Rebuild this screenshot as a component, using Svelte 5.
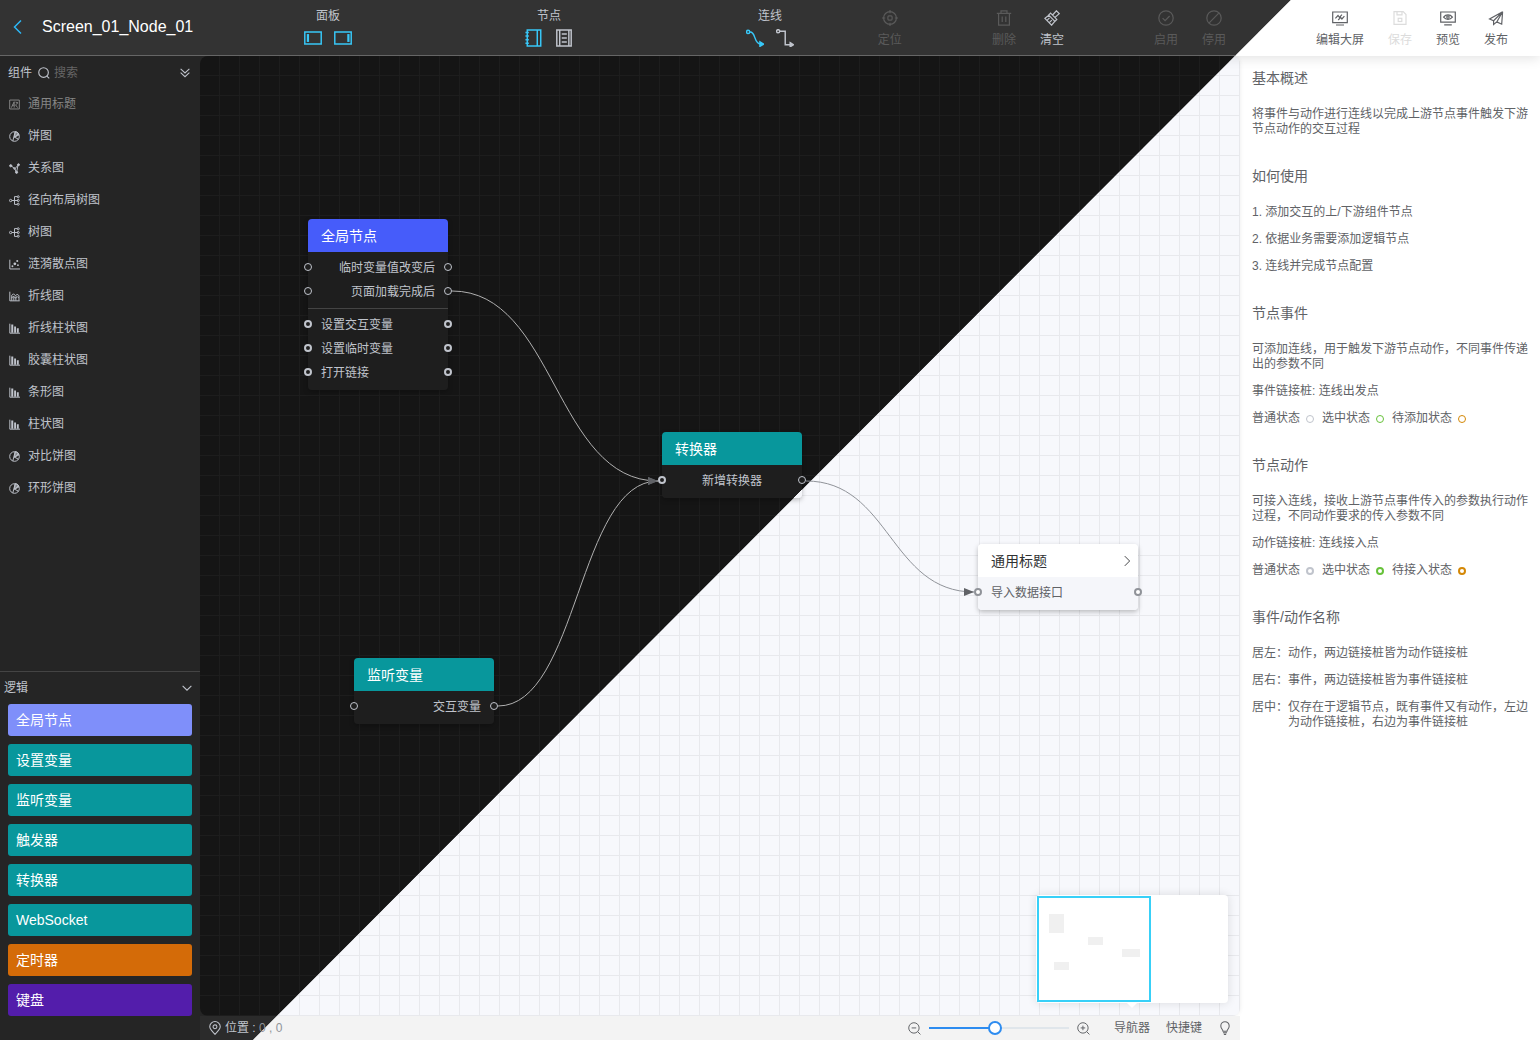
<script>
  let keyword = $state('');
  let zoom = $state(47);

  const icons = {
    back: '<path d="M11 1.5 4.5 8l6.5 6.5"/>',
    panelLeft: '<path d="M.7 2.7h14.6v10.6H.7z"/><path d="M3.5 4.5v7" stroke-width="2"/>',
    panelRight: '<path d="M.7 2.7h14.6v10.6H.7z"/><path d="M12.8 4.5v7" stroke-width="2"/>',
    notebook: '<path d="M2 .9h12v14.2H2zM10.900 .9v14.200"/><path d="M.4 3.2h3M.4 6.3h3M.4 9.500h3M.4 12.700h3"/>',
    list: '<path d="M1.600.9h12.800v14.200H1.600zM4.200.9v14.200M12.300.9v14.200"/><path d="M6 4.500h4.500M6 8h4.500M6 11.500h4.500"/>',
    smooth: '<circle cx="1.9" cy="2.6" r="1.4"/><path d="M3.5 2.6C9 2.2 6.5 13 13 13.4"/><path d="m12.4 11.4 3.2 2-3.2 2z" fill="currentColor"/>',
    elbow: '<circle cx="1.9" cy="2" r="1.4"/><path d="M3.5 2h4.7v12H13"/><path d="m12.6 12.2 2.8 1.8-2.8 1.8z" fill="currentColor"/>',
    locate: '<circle cx="8" cy="8" r="6.4"/><rect x="5.9" y="5.9" width="4.2" height="4.2" rx="1"/><path d="M8 0v3.2M8 12.8V16M0 8h3.2M12.8 8H16"/>',
    trash: '<path d="M.8 3.4h14.4M5 3.2V.8h6v2.4M2.6 3.6v11.6h10.8V3.6M6.2 6.5v5.6M9.8 6.5v5.6"/>',
    brush: '<path d="m6.600 3.200 6.200 6.200-1.900 1.900-6.200-6.200zM8.600 5l3.800-4.200 2.800 2.800-4.200 3.800M4.900 5.300.9 8.400l6.700 6.800 3.400-4.100M3 10.400l2.500-2.500M5.300 12.700l2.500-2.500"/>',
    check: '<circle cx="8" cy="8" r="7.2"/><path d="m4.6 8.1 2.5 2.5 4.5-4.6"/>',
    ban: '<circle cx="8" cy="8" r="7.2"/><path d="M3.2 12.8 12.8 3.2"/>',
    screen: '<path d="M.7 2h14.6v10.6H.7zM4 15h8"/><path d="m3.4 8.3 2.6-2.8 1.4 1.8L10 4.6M6.2 10l2.5-2.6 1.2 1.6 2.5-2.8"/>',
    save: '<path d="M2 1.7h9.2L14 4.5v9.8H2zM5 1.9v3h5v-3"/><rect x="6.2" y="8.3" width="3.6" height="3.2"/>',
    preview: '<path d="M.7 2h14.6v10.2H.7zM4.2 14.8h7.6"/><path d="M3.6 7.1c2.3-3 6.5-3 8.8 0-2.3 3-6.5 3-8.800 0z"/><circle cx="8" cy="7.1" r="1.2"/>',
    publish: '<path d="M14.600 1.800 1.600 9l4 1.700zM14.600 1.800l-.9 12.400-4.900-2.300zM5.600 10.700v3.800l3.200-2.600"/>',
    search: '<circle cx="7.4" cy="7.4" r="6.4"/><path d="m11.8 12.2 3.2 3"/>',
    doubleDown: '<path d="m1 1.500 7 6.500 7-6.500M1 7.500l7 6.500 7-6.500"/>',
    down: '<path d="m1 4.500 7 7 7-7"/>',
    right: '<path d="m5 1.5 6.5 6.5L5 14.5"/>',
    title: '<path d="M1 1.5h14v13H1zM3.5 12.5l4-8.5v8.5M4.5 9h3M9.5 4.5l3.5 1-3.5 3 3 4"/>',
    pie: '<circle cx="8" cy="8" r="7"/><path d="M5.500 14.500 9 1M8 9l5.500-5M8 9l6 3"/><path d="M9 1c3.500 0 5.500 2.500 5 5L8 9z" fill="currentColor" fill-opacity=".6"/>',
    relation: '<path d="m3 4 5.5 4.3L13.5 3M8.5 8.3l2.2 5.2M13 3.5l-1.5 8"/><circle cx="2.5" cy="4" r="1.6" fill="currentColor"/><circle cx="13.8" cy="2.5" r="1.4" fill="currentColor"/><circle cx="11" cy="13.5" r="1.6" fill="currentColor"/><circle cx="8" cy="8" r="1.2"/>',
    tree: '<circle cx="2.4" cy="8" r="1.7"/><path d="M4.2 8H13M12 2.3H8v11.4h4"/><circle cx="13.4" cy="2.6" r="1.5"/><circle cx="13.4" cy="8" r="1.5"/><circle cx="13.4" cy="13.4" r="1.5"/>',
    scatter: '<path d="M1.2 1v13.5H16"/><g fill="currentColor" stroke="none"><circle cx="5" cy="10.5" r="1.4"/><circle cx="8.5" cy="7" r="2"/><circle cx="13" cy="9" r="1.3"/><circle cx="12" cy="2.8" r="1.5"/></g>',
    line: '<path d="M1.2 1v13.3H15.5M3.5 7l3-3 3 3 2.5-2.5L14.5 7v7M3.5 10l3-2 3 2 2.5-2 2 2M4 7v7M7 8v6M10 8v6"/>',
    bar: '<path d="M1.2 1v13.8H16"/><g fill="currentColor" stroke="none"><path d="M3.3 2h2.9v12H3.3zM7.5 5h2.7v9H7.5zM11.4 7.5h2.8V14h-2.8z"/></g>',
    pin: '<path d="M8 15.2C4.6 11.8 2 9.2 2 6.6a6 6 0 0 1 12 0c0 2.6-2.6 5.2-6 8.6z"/><circle cx="8" cy="6.6" r="2.2"/>',
    zoomOut: '<circle cx="7.3" cy="7.3" r="6.4"/><path d="m12 12 3.3 3.3M4.5 7.3h5.6"/>',
    zoomIn: '<circle cx="7.3" cy="7.3" r="6.4"/><path d="m12 12 3.3 3.3M4.5 7.3h5.6M7.3 4.5v5.6"/>',
    bulb: '<path d="M5.7 11.8c0-2-2.5-3-2.5-6.2a4.8 4.8 0 0 1 9.6 0c0 3.2-2.5 4.2-2.5 6.2zM5.7 13.5h4.6M6.7 15.3h2.6"/>'
  };

  const switches = [
    { label: '面板', items: [['panelLeft', '左侧面板', true], ['panelRight', '右侧面板', true]] },
    { label: '节点', items: [['notebook', '节点展开', true], ['list', '节点收起', false]] },
    { label: '连线', items: [['smooth', '曲线', true], ['elbow', '折线', false]] }
  ];

  const actions = [
    [{ icon: 'locate', label: '定位', disabled: true }],
    [{ icon: 'trash', label: '删除', disabled: true }, { icon: 'brush', label: '清空' }],
    [{ icon: 'check', label: '启用', disabled: true }, { icon: 'ban', label: '停用', disabled: true }]
  ];

  const pageActions = [
    { icon: 'screen', label: '编辑大屏' },
    { icon: 'save', label: '保存', disabled: true },
    { icon: 'preview', label: '预览' },
    { icon: 'publish', label: '发布' }
  ];

  const components = [
    { icon: 'title', name: '通用标题', used: true },
    { icon: 'pie', name: '饼图' },
    { icon: 'relation', name: '关系图' },
    { icon: 'tree', name: '径向布局树图' },
    { icon: 'tree', name: '树图' },
    { icon: 'scatter', name: '涟漪散点图' },
    { icon: 'line', name: '折线图' },
    { icon: 'bar', name: '折线柱状图' },
    { icon: 'bar', name: '胶囊柱状图' },
    { icon: 'bar', name: '条形图' },
    { icon: 'bar', name: '柱状图' },
    { icon: 'pie', name: '对比饼图' },
    { icon: 'pie', name: '环形饼图' }
  ];

  const logics = [
    { name: '全局节点', type: 'global' },
    { name: '设置变量', type: 'normal' },
    { name: '监听变量', type: 'normal' },
    { name: '触发器', type: 'normal' },
    { name: '转换器', type: 'normal' },
    { name: 'WebSocket', type: 'normal' },
    { name: '定时器', type: 'timer' },
    { name: '键盘', type: 'keyboard' }
  ];

  // ports: thin 事件链接桩, thick 动作链接桩
  const nodes = [
    {
      name: '全局节点', type: 'blue', x: 108, y: 163, width: 140,
      groups: [
        [
          { text: '临时变量值改变后', align: 'right', ports: ['thin', 'thin'] },
          { text: '页面加载完成后', align: 'right', ports: ['thin', 'thin'] }
        ],
        [
          { text: '设置交互变量', align: 'left', ports: ['thick', 'thick'] },
          { text: '设置临时变量', align: 'left', ports: ['thick', 'thick'] },
          { text: '打开链接', align: 'left', ports: ['thick', 'thick'] }
        ]
      ]
    },
    {
      name: '转换器', type: 'teal split', x: 462, y: 376, width: 140,
      groups: [[{ text: '新增转换器', align: 'center', ports: ['thick', 'thin'] }]]
    },
    {
      name: '监听变量', type: 'teal', x: 154, y: 602, width: 140,
      groups: [[{ text: '交互变量', align: 'right', ports: ['thin', 'thin'] }]]
    },
    {
      name: '通用标题', type: 'light', x: 778, y: 488, width: 160, arrow: true,
      groups: [[{ text: '导入数据接口', align: 'left', ports: ['thick', 'thick'] }]]
    }
  ];

  const edges = [
    { d: 'M252 235C355 235 355 425 458 425', dark: true },
    { d: 'M298 650C378 650 378 425 458 425', dark: true },
    { d: 'M606 425C690 425 690 536 774 536' }
  ];

  const docs = [
    { title: '基本概述', lines: [{ text: '将事件与动作进行连线以完成上游节点事件触发下游节点动作的交互过程' }] },
    {
      title: '如何使用',
      lines: [
        { text: '1. 添加交互的上/下游组件节点' },
        { text: '2. 依据业务需要添加逻辑节点' },
        { text: '3. 连线并完成节点配置' }
      ]
    },
    {
      title: '节点事件',
      lines: [
        { text: '可添加连线，用于触发下游节点动作，不同事件传递出的参数不同' },
        { text: '事件链接桩: 连线出发点' },
        { port: 'thin', states: ['普通状态', '选中状态', '待添加状态'] }
      ]
    },
    {
      title: '节点动作',
      lines: [
        { text: '可接入连线，接收上游节点事件传入的参数执行动作过程，不同动作要求的传入参数不同' },
        { text: '动作链接桩: 连线接入点' },
        { port: 'thick', states: ['普通状态', '选中状态', '待接入状态'] }
      ]
    },
    {
      title: '事件/动作名称',
      lines: [
        { hanging: true, text: '居左：动作，两边链接桩皆为动作链接桩' },
        { hanging: true, text: '居右：事件，两边链接桩皆为事件链接桩' },
        { hanging: true, text: '居中：仅存在于逻辑节点，既有事件又有动作，左边为动作链接桩，右边为事件链接桩' }
      ]
    }
  ];
  const stateColors = ['#c0c4cc', '#67c23a', '#d48806'];

  const visible = $derived(components.filter((c) => c.name.includes(keyword)));
</script>

{#snippet icon(name, size = 16, stroke = 1.2)}
  <svg
    width={size}
    height={size}
    viewBox="0 0 16 16"
    fill="none"
    stroke="currentColor"
    stroke-width={stroke}
    aria-hidden="true">{@html icons[name]}</svg>
{/snippet}

{#snippet tool(item)}
  <button class="tool" disabled={item.disabled}>
    {@render icon(item.icon)}
    <span>{item.label}</span>
  </button>
{/snippet}

<div class="editor">
  {#each ['theme-light', 'theme-dark'] as theme}
    <div class="theme {theme}" aria-hidden="true">
      <div class="theme-bar"></div>
      <div class="theme-canvas"></div>
      <div class="theme-foot"></div>
    </div>
  {/each}

  <header>
    <div class="name">
      <button class="back" aria-label="返回">{@render icon('back', 16, 1.5)}</button>
      <h1>Screen_01_Node_01</h1>
    </div>
    <div class="toolbar">
      <div class="switches">
        {#each switches as group}
          <div class="switch">
            <span>{group.label}</span>
            <div class="switch-items">
              {#each group.items as [name, label, active]}
                <button class:active aria-label={label}>{@render icon(name, 18, 1.3)}</button>
              {/each}
            </div>
          </div>
        {/each}
      </div>
      <div class="actions">
        {#each actions as group}
          <div class="group">
            {#each group as item}{@render tool(item)}{/each}
          </div>
        {/each}
      </div>
    </div>
    <div class="group page-actions">
      {#each pageActions as item}{@render tool(item)}{/each}
    </div>
  </header>

  <div class="body">
    <aside class="sidebar">
      <div class="search">
        <label for="keyword">组件</label>
        {@render icon('search', 12, 1.5)}
        <input id="keyword" type="text" placeholder="搜索" bind:value={keyword} />
        <button aria-label="全部收起">{@render icon('doubleDown', 10, 1.7)}</button>
      </div>
      <ul class="components">
        {#each visible as item}
          <li>
            <button class:used={item.used}>
              {@render icon(item.icon, 11, 1.4)}
              <span>{item.name}</span>
            </button>
          </li>
        {/each}
      </ul>
      <div class="logic">
        <div class="logic-head">
          <span>逻辑</span>
          <button aria-label="收起">{@render icon('down', 10, 1.7)}</button>
        </div>
        {#each logics as item}
          <button class="logic-item {item.type}">{item.name}</button>
        {/each}
      </div>
    </aside>

    <main>
      <div class="canvas">
        <svg class="edges" aria-hidden="true">
          <defs>
            <marker id="arrow" viewBox="0 0 10 8" refX="10" refY="4" markerWidth="10" markerHeight="8" orient="0" markerUnits="userSpaceOnUse">
              <path d="M0 0 10 4 0 8z" fill="#606266" />
            </marker>
          </defs>
          {#each edges as edge}
            <path class:dark={edge.dark} d={edge.d} marker-end="url(#arrow)" />
          {/each}
        </svg>

        {#each nodes as node}
          <div class="node {node.type}" style="left: {node.x}px; top: {node.y}px; width: {node.width}px">
            <div class="node-head">
              <span>{node.name}</span>
              {#if node.arrow}{@render icon('right', 12)}{/if}
            </div>
            <div class="node-body">
              {#each node.groups as rows}
                <div class="node-group">
                  {#each rows as row}
                    <div class="row" style="text-align: {row.align}">
                      <i class="port start {row.ports[0]}"></i>
                      {row.text}
                      <i class="port end {row.ports[1]}"></i>
                    </div>
                  {/each}
                </div>
              {/each}
            </div>
          </div>
        {/each}

        <div class="minimap">
          <svg width="192" height="108" aria-hidden="true">
            <g fill="#f0f0f0">
              <rect x="13" y="19" width="15" height="19" />
              <rect x="52" y="42" width="15" height="8" />
              <rect x="86" y="54" width="18" height="8" />
              <rect x="18" y="67" width="15" height="8" />
            </g>
            <rect x="2" y="2" width="112" height="104" fill="none" stroke="#38d0f8" stroke-width="2" />
          </svg>
        </div>
      </div>

      <footer>
        <div class="position">
          {@render icon('pin', 14)}
          <span>位置 : <em>0 , 0</em></span>
        </div>
        <div class="zoom">
          <button aria-label="缩小">{@render icon('zoomOut', 13)}</button>
          <input
            type="range"
            min="0"
            max="100"
            aria-label="缩放"
            bind:value={zoom}
            style="--percent: {zoom}%"
          />
          <button aria-label="放大">{@render icon('zoomIn', 13)}</button>
        </div>
        <button>导航器</button>
        <button>快捷键</button>
        <button aria-label="帮助">{@render icon('bulb', 14)}</button>
      </footer>
    </main>

    <aside class="docs">
      {#each docs as doc}
        <section>
          <h2>{doc.title}</h2>
          {#each doc.lines as line}
            {#if line.states}
              <p class="states">
                {#each line.states as state, i}
                  <span>{state}</span><i class="dot {line.port}" style="border-color: {stateColors[i]}"></i>
                {/each}
              </p>
            {:else}
              <p class:hanging={line.hanging}>{line.text}</p>
            {/if}
          {/each}
        </section>
      {/each}
    </aside>
  </div>
</div>

<style>
  :global(body) {
    margin: 0;
  }
  .editor {
    position: relative;
    display: flex;
    flex-direction: column;
    min-height: 100vh;
    font-family: 'Liberation Sans', 'Noto Sans CJK SC', sans-serif;
    font-size: 12px;
    line-height: 16px;
    color: #c0c4cc;
  }
  button {
    display: flex;
    align-items: center;
    padding: 0;
    border: none;
    background: none;
    color: inherit;
    font: inherit;
    cursor: pointer;
  }
  svg {
    flex: none;
    display: block;
  }

  /* 明暗主题对角分割的背景 */
  .theme {
    position: absolute;
    inset: 0;
    isolation: isolate;
    display: flex;
    flex-direction: column;
  }
  .theme-bar {
    position: relative;
    z-index: 1;
    height: 56px;
    box-sizing: border-box;
  }
  .theme-canvas {
    flex: 1;
    margin: 0 300px 0 200px;
    border-radius: 8px;
    background-size: 20px 20px;
  }
  .theme-foot {
    height: 24px;
    margin: 0 300px 0 200px;
  }
  .theme-light {
    background: #fff;
  }
  .theme-light .theme-bar {
    background: #fff;
    box-shadow: 0 2px 12px rgba(0, 0, 0, 0.12);
  }
  .theme-light .theme-canvas {
    background-color: #f7f8fc;
    background-image: linear-gradient(to right, transparent 19px, #e8e9ed 19px),
      linear-gradient(to bottom, transparent 19px, #e8e9ed 19px);
    box-shadow: 0 0 4px rgba(0, 0, 0, 0.08);
  }
  .theme-light .theme-foot {
    background: #f3f3f3;
  }
  .theme-dark {
    background: #252525;
    clip-path: polygon(0 0, 83.8% 0, 16.4% 100%, 0 100%);
  }
  .theme-dark .theme-bar {
    background: #333;
    border-bottom: 1px solid #666;
  }
  .theme-dark .theme-canvas {
    background-color: #151515;
    background-image: linear-gradient(to right, transparent 19px, #1d1d1d 19px),
      linear-gradient(to bottom, transparent 19px, #1d1d1d 19px);
  }
  .theme-dark .theme-foot {
    background: #2b2b2b;
  }

  header {
    position: relative;
    display: flex;
    height: 56px;
  }
  .name {
    display: flex;
    align-items: center;
    gap: 16px;
    width: 288px;
    padding: 0 0 2px 10px;
    box-sizing: border-box;
  }
  .back {
    color: #2db7f5;
  }
  h1 {
    margin: 0;
    font-size: 16px;
    font-weight: 400;
    color: #fff;
  }
  .toolbar {
    flex: 1;
    display: flex;
    justify-content: space-between;
    padding: 0 90px 0 10px;
  }
  .switches {
    display: flex;
    gap: 161px;
  }
  .switch {
    display: flex;
    flex-direction: column;
    align-items: center;
    width: 60px;
    padding-top: 8px;
  }
  .switch-items {
    display: flex;
    gap: 12px;
    margin-top: 5px;
  }
  .active {
    color: #38c8f8;
  }
  .actions {
    display: flex;
    gap: 90px;
  }
  .group {
    display: flex;
    gap: 24px;
  }
  .tool {
    flex-direction: column;
    align-self: flex-start;
    gap: 6px;
    padding-top: 10px;
  }
  .tool:disabled {
    color: #5a5a5a;
    cursor: not-allowed;
  }
  .page-actions {
    padding-right: 32px;
    color: #606266;
  }
  .page-actions .tool:disabled {
    color: #dcdcdc;
  }

  .body {
    position: relative;
    flex: 1;
    display: flex;
  }
  .sidebar {
    display: flex;
    flex-direction: column;
    width: 200px;
  }
  .search {
    display: flex;
    align-items: center;
    height: 32px;
    padding: 2px 10px 0 8px;
    box-sizing: border-box;
  }
  .search label {
    margin-right: 6px;
  }
  .search input {
    flex: 1;
    min-width: 0;
    margin: 0;
    padding: 0 0 0 4px;
    border: none;
    outline: none;
    background: none;
    color: inherit;
    font: inherit;
  }
  .search input::placeholder {
    color: #666;
  }
  .components {
    flex: 1;
    margin: 0;
    padding: 0;
    list-style: none;
  }
  .components button {
    gap: 8px;
    width: 100%;
    height: 32px;
    padding-left: 9px;
  }
  .components .used {
    color: #868686;
  }
  .logic {
    display: flex;
    flex-direction: column;
    gap: 8px;
    padding: 0 8px 24px;
    border-top: 1px solid #444;
  }
  .logic-head {
    display: flex;
    align-items: center;
    justify-content: space-between;
    height: 24px;
    margin-left: -4px;
    padding-top: 8px;
    box-sizing: border-box;
  }
  .logic-item {
    height: 32px;
    padding: 0 8px;
    border-radius: 3px;
    font-size: 14px;
    color: #fff;
  }
  .global {
    background: #7f8ffa;
  }
  .normal {
    background: #08979c;
  }
  .timer {
    background: #d46b08;
  }
  .keyboard {
    background: #531dab;
  }

  main {
    flex: 1;
    display: flex;
    flex-direction: column;
    min-width: 0;
  }
  .canvas {
    position: relative;
    flex: 1;
    overflow: hidden;
  }
  .edges {
    position: absolute;
    width: 100%;
    height: 100%;
  }
  .edges > path {
    fill: none;
    stroke: #909399;
  }
  .edges > path.dark {
    stroke: #b0b0b0;
  }
  .node {
    position: absolute;
    border-radius: 4px;
    box-shadow: 0 2px 5px rgba(0, 0, 0, 0.25);
  }
  .node-head {
    display: flex;
    align-items: center;
    justify-content: space-between;
    height: 33px;
    padding: 0 5px 0 13px;
    border-radius: 4px 4px 0 0;
    font-size: 14px;
    color: #fff;
  }
  .blue .node-head {
    background: #465cfa;
  }
  .teal .node-head {
    background: #08979c;
  }
  .light .node-head {
    background: #fff;
    color: #303133;
  }
  .node-body {
    padding-bottom: 1px;
    border-radius: 0 0 4px 4px;
    background: #1e1e1e;
  }
  .split .node-body {
    background: linear-gradient(315deg, #f5f6fa 6px, #1e1e1e 6px);
  }
  .light .node-body {
    background: #f5f6fa;
    color: #606266;
  }
  .node-group {
    padding: 3px 0 5px;
  }
  .node-group + .node-group {
    border-top: 1px solid #444;
  }
  .row {
    position: relative;
    height: 24px;
    padding: 0 13px;
    line-height: 26px;
  }
  .port {
    position: absolute;
    top: 8px;
    width: 8px;
    height: 8px;
    box-sizing: border-box;
    border: 1px solid #c0c4cc;
    border-radius: 50%;
    background: #1e1e1e;
  }
  .start {
    left: -4px;
  }
  .end {
    right: -4px;
  }
  .port.thick {
    border-width: 2px;
  }
  .light .port {
    border-color: #909399;
    background: #fff;
  }
  .minimap {
    position: absolute;
    right: 12px;
    bottom: 13px;
    border-radius: 4px;
    background: #fff;
    box-shadow: 0 0 10px rgba(0, 0, 0, 0.12);
  }
  .minimap::after {
    content: '';
    position: absolute;
    top: 100%;
    left: 91px;
    border: 5px solid transparent;
    border-top-color: #fff;
  }

  footer {
    display: flex;
    align-items: center;
    gap: 16px;
    height: 24px;
    padding: 0 8px;
    color: #606266;
  }
  .position {
    display: flex;
    align-items: center;
    gap: 3px;
    margin-right: auto;
    color: #c0c4cc;
  }
  .position em {
    font-style: normal;
    color: #909399;
  }
  .zoom {
    display: flex;
    align-items: center;
    gap: 8px;
    margin-right: 8px;
  }
  input[type='range'] {
    width: 140px;
    height: 14px;
    margin: 0;
    appearance: none;
    background: linear-gradient(to right, #2d8cf0 var(--percent), #e0e6eb var(--percent)) center / 100% 2px no-repeat;
  }
  input[type='range']::-webkit-slider-thumb {
    appearance: none;
    width: 14px;
    height: 14px;
    box-sizing: border-box;
    border: 2px solid #2d8cf0;
    border-radius: 50%;
    background: #fff;
  }

  .docs {
    width: 300px;
    padding: 13px 12px 0;
    box-sizing: border-box;
    line-height: 15px;
    color: #606266;
  }
  section {
    margin-bottom: 30px;
  }
  h2 {
    margin: 0 0 20px;
    font-size: 14px;
    font-weight: 400;
    line-height: 18px;
  }
  p {
    margin: 0 0 12px;
  }
  .hanging {
    padding-left: 36px;
    text-indent: -36px;
  }
  .states {
    display: flex;
    align-items: center;
  }
  .dot {
    width: 8px;
    height: 8px;
    margin: 0 8px 0 6px;
    box-sizing: border-box;
    border: 1px solid;
    border-radius: 50%;
  }
  .dot.thick {
    border-width: 2px;
  }
</style>
